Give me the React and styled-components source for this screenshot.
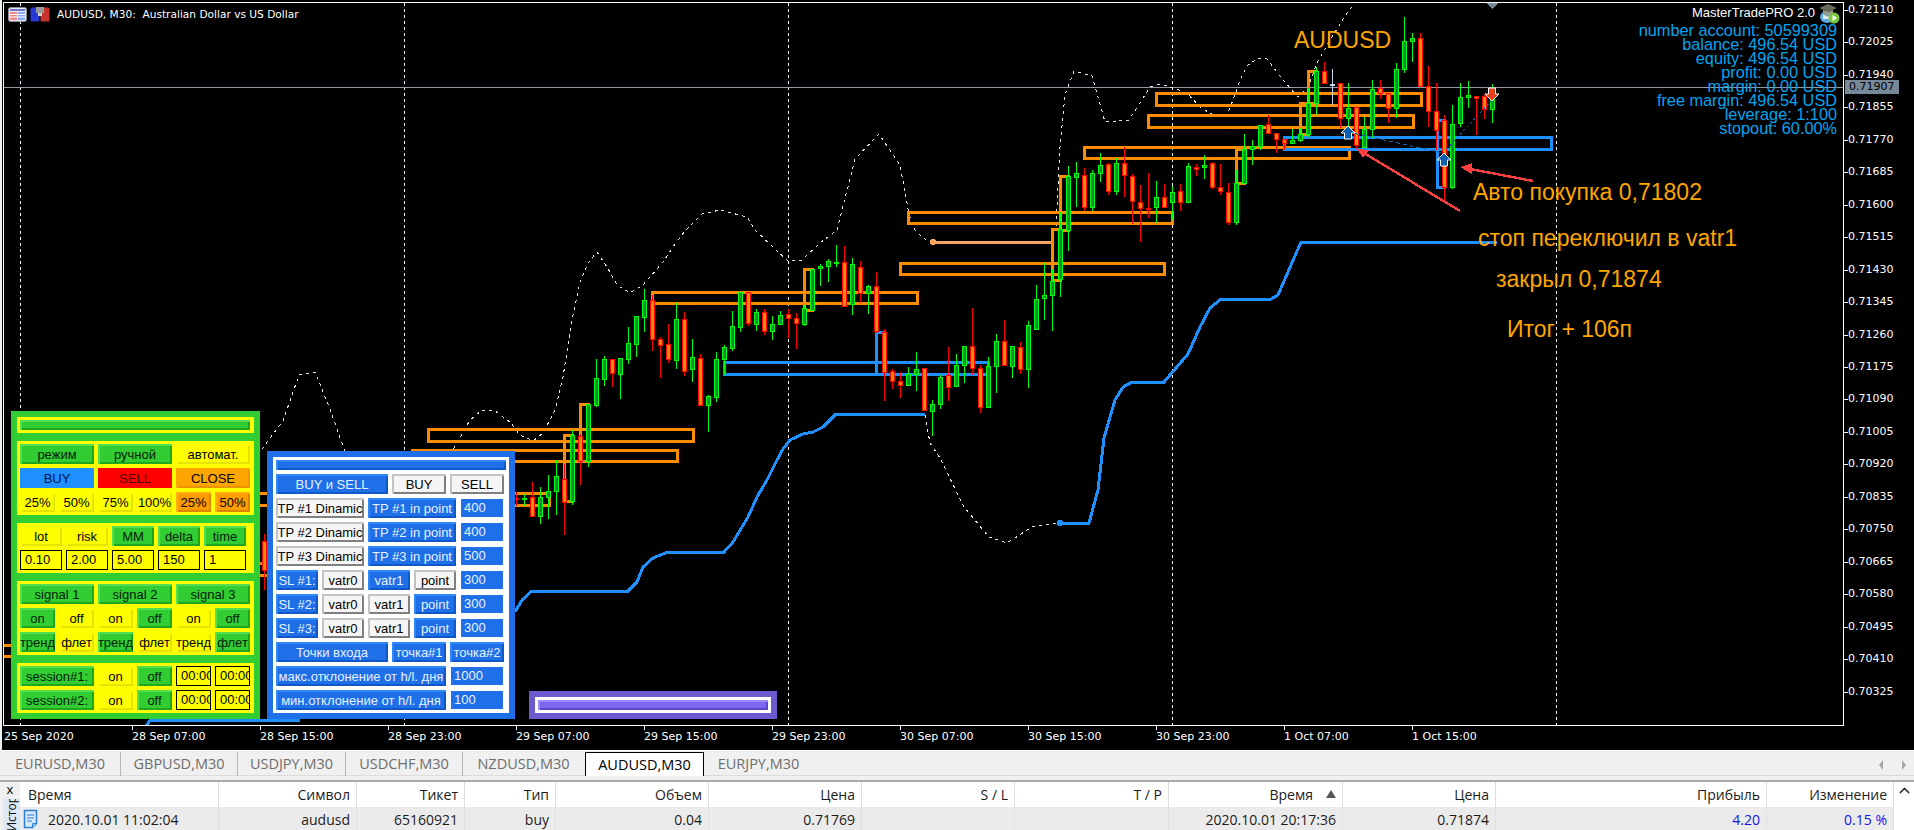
import React from "react"
import styled, { createGlobalStyle } from "styled-components"
import { ChevronUp } from "lucide-react"

const GlobalStyle = createGlobalStyle`
  html, body {
    margin: 0;
    padding: 0;
    background: #f0f0f0;
    overflow: hidden;
  }
  * {
    box-sizing: border-box;
  }
`

// type, body top, body bottom, wick top, wick bottom. first candle sits at x=516, step is 8px
const candles = [
  ["r",498,498,492,506],["g",498,498,494,506],["r",497,516,482,517],["g",497,516,487,524],
  ["g",491,497,475,519],["g",476,491,460,515],["r",479,502,464,535],["g",435,501,430,505],
  ["r",436,461,434,485],["g",404,461,404,467],["g",378,405,359,407],["g",359,379,356,386],
  ["r",359,373,359,387],["g",358,374,358,399],["g",343,359,327,364],["g",316,344,316,357],
  ["g",300,317,289,332],["r",300,339,295,351],["r",339,345,337,378],["r",344,359,324,363],
  ["g",319,360,303,369],["r",319,371,312,376],["g",357,369,339,382],["r",358,405,354,405],
  ["g",396,405,395,432],["g",359,397,352,402],["g",347,359,345,375],["g",326,348,311,351],
  ["g",292,327,292,332],["r",292,323,292,326],["g",312,324,309,331],["r",312,331,309,335],
  ["g",324,331,316,340],["g",315,324,311,325],["r",314,318,309,338],["r",318,323,313,349],
  ["g",308,324,305,326],["g",269,310,269,310],["g",266,268,264,286],["g",261,266,259,282],
  ["g",262,262,245,267],["r",262,306,246,306],["g",264,304,258,315],["r",267,293,261,303],
  ["g",286,293,285,314],["r",286,331,272,333],["r",332,372,329,401],["r",371,381,369,389],
  ["r",381,385,372,398],["g",374,385,367,386],["g",369,374,352,391],["r",368,410,368,410],
  ["g",404,411,400,436],["g",377,404,375,409],["r",375,387,347,401],["g",365,386,354,387],
  ["g",346,365,346,383],["r",346,368,308,375],["r",368,407,365,413],["g",366,407,357,407],
  ["g",341,366,334,393],["r",341,365,320,365],["g",346,366,346,378],["r",347,369,342,374],
  ["g",325,369,321,388],["g",299,329,285,329],["g",295,298,263,320],["g",281,295,269,331],
  ["g",229,279,212,297],["g",176,230,166,251],["g",173,177,162,207],["r",175,207,168,211],
  ["g",173,207,170,211],["g",165,173,153,182],["r",164,191,163,195],["g",163,191,158,195],
  ["r",163,175,147,197],["r",176,201,174,224],["r",202,208,185,242],["r",208,208,173,218],
  ["g",197,207,181,223],["r",197,207,184,207],["g",192,202,186,220],["r",191,202,184,211],
  ["g",166,202,163,202],["r",167,169,164,176],["g",165,167,155,179],["r",163,187,162,189],
  ["r",187,191,164,195],["r",192,222,183,225],["g",183,222,170,225],["g",149,183,134,183],
  ["g",146,149,140,165],["g",125,146,125,150],["r",124,133,115,133],["r",133,139,133,153],
  ["r",139,143,139,150],["g",140,143,129,144],["g",134,140,128,142],["g",103,134,88,137],
  ["g",71,103,67,115],["r",71,83,62,83],["w",84,84,69,105],["r",83,118,83,128],
  ["g",108,118,83,133],["r",107,145,107,149],["g",129,147,117,147],["g",89,129,80,138],
  ["r",88,93,80,99],["r",93,108,93,123],["g",69,108,63,118],["g",41,69,17,73],
  ["g",38,41,33,62],["r",38,86,33,86],["r",86,111,66,127],["r",111,130,83,150],
  ["r",120,187,115,200],["g",124,187,105,189],["g",97,123,83,127],["g",95,97,81,108],
  ["r",96,98,96,135],["r",96,109,94,119],["g",88,109,84,123],
]

const candleColors = {
  r: { line: "#ff0000", fill: "#ff8c00" },
  g: { line: "#00ff00", fill: "#0b8c3e" },
  w: { line: "#c8d6f0", fill: "#c8d6f0" },
}

// x1, y1, x2, y2
const orangeBoxes = [
  [1156,93,1421,105],[1148,115,1413,127],[1084,147,1349,158],[908,212,1172,223],[900,263,1164,274],
  [652,292,917,303],[428,429,693,441],[412,450,677,461],[240,493,549,505],[150,563,290,575],[-5,645,50,656],
  [804,269,812,310],[580,404,588,461],[564,435,572,501],[1060,176,1068,230],[1052,229,1060,280],
  [1236,149,1244,183],[1300,103,1308,134],[1308,71,1316,103],
]

const blueBoxes = [
  [724,362,988,374],[1284,137,1551,149],[876,332,884,374],[1437,120,1444,187],
]

const stopLines = [
  "145,728 150,720 300,720",
  "515,612 522,600 532,591 628,591 637,582 643,567 653,558 668,552 724,552 733,542 748,517 757,497 767,480 777,460 783,449 790,440 803,434 813,432 823,427 836,414 925,414",
  "1060,523 1089,523 1098,490 1104,438 1110,417 1115,400 1123,387 1132,382 1164,382 1188,354 1200,327 1210,308 1221,299 1271,299 1278,295 1301,242 1497,242",
]

const dottedLines = [
  "258,455 270,438 283,421 299,375 315,372 330,409 345,452",
  "450,455 457,443 470,420 482,410 495,411 510,422 520,435 533,441 543,433 555,410 563,377 572,320 580,282 588,263 597,252 607,267 617,285 630,293 643,285 663,262 673,247 684,232 702,214 720,210 747,217 755,230 773,247 787,260 802,260 820,243 837,230 855,159 879,134 900,165 909,214 915,230 923,238 932,242",
  "925,415 930,443 940,458 964,507 989,537 1007,543 1032,527 1060,523",
  "1056,226 1060,147 1065,95 1074,71 1092,76 1105,122 1129,120 1150,87 1160,84 1173,88 1187,93 1200,107 1213,115 1227,115 1233,100 1242,75 1248,65 1258,58 1267,59 1283,80 1298,97 1308,87 1317,63 1330,40 1347,13 1355,3",
]

const prices = ["0.72110","0.72025","0.71940","0.71855","0.71770","0.71685","0.71600","0.71515","0.71430","0.71345","0.71260","0.71175","0.71090","0.71005","0.70920","0.70835","0.70750","0.70665","0.70580","0.70495","0.70410","0.70325"]
const times = ["25 Sep 2020","28 Sep 07:00","28 Sep 15:00","28 Sep 23:00","29 Sep 07:00","29 Sep 15:00","29 Sep 23:00","30 Sep 07:00","30 Sep 15:00","30 Sep 23:00","1 Oct 07:00","1 Oct 15:00"]
const tabs = ["EURUSD,M30","GBPUSD,M30","USDJPY,M30","USDCHF,M30","NZDUSD,M30","AUDUSD,M30","EURJPY,M30"]
const account = ["number account: 50599309","balance: 496.54 USD","equity: 496.54 USD","profit: 0.00 USD","margin: 0.00 USD","free margin: 496.54 USD","leverage: 1:100","stopout: 60.00%"]
const headers = ["Время","Символ","Тикет","Тип","Объем","Цена","S / L","T / P","Время","Цена","Прибыль","Изменение"]

const tones = {
  green: { bg: "#32cd32", hi: "#52e052", lo: "#1fa81f", fg: "#06200a" },
  yellow: { bg: "#ffff00", hi: "#ffff00", lo: "#e4e400", fg: "#000" },
  dodger: { bg: "#1e90ff", hi: "#1e90ff", lo: "#1e90ff", fg: "#00104a" },
  red: { bg: "#ff0000", hi: "#ff0000", lo: "#ff0000", fg: "#4a0000" },
  orange: { bg: "#ffa500", hi: "#ffa500", lo: "#e89500", fg: "#000" },
  amber: { bg: "#ff9c00", hi: "#ffae10", lo: "#dd8600", fg: "#000" },
  blue: { bg: "#1e6fe8", hi: "#2f88f5", lo: "#0f58c8", fg: "#e8f2ff" },
  white: { bg: "#f5f5f5", hi: "#c4c4c4", lo: "#808080", fg: "#000" },
  violet: { bg: "#7b68ee", hi: "#9a88ff", lo: "#5a48cf", fg: "#fff" },
}

const raised = tone => `inset 2px 2px 0 ${tones[tone].hi}, inset -2px -2px 0 ${tones[tone].lo}`

const Shell = styled.div`
  width: 1914px;
  height: 830px;
  overflow: hidden;
  display: flex;
  flex-direction: column;
  background: #f0f0f0;
`

const ChartArea = styled.div`
  position: relative;
  height: 750px;
  flex: none;
  background: #000;
  box-shadow: inset 2px 0 0 #efefef;
  padding: 2px 0 0 3px;
  font-family: "DejaVu Sans", sans-serif;
  font-size: 11px;
  color: #fff;
`

const ChartRow = styled.div`
  display: flex;
  height: 724px;
`

const Plot = styled.div`
  width: 1841px;
  flex: none;
  border: 1px solid #fff;
  svg {
    display: block;
  }
`

const PriceAxis = styled.div`
  flex: 1;
  padding-top: 1px;
`

const PriceRow = styled.div`
  height: 32.46px;
  line-height: 14px;
  padding-left: 4px;
  position: relative;
  &::before {
    content: "";
    position: absolute;
    left: 0;
    top: 7px;
    width: 4px;
    height: 1px;
    background: #fff;
  }
`

const PriceTag = styled.div`
  position: absolute;
  left: 1845px;
  top: 80px;
  width: 54px;
  height: 14px;
  line-height: 14px;
  background: #778899;
  color: #000;
  padding-left: 4px;
`

const TimeAxis = styled.div`
  display: flex;
  padding: 4px 0 0 1px;
`

const TimeCell = styled.div`
  width: 128px;
  flex: none;
  line-height: 14px;
  position: relative;
  &::before {
    content: "";
    position: absolute;
    left: 0;
    top: -4px;
    width: 1px;
    height: 4px;
    background: #fff;
    display: ${p => (p.$first ? "none" : "block")};
  }
`

const ChartTitle = styled.div`
  position: absolute;
  left: 8px;
  top: 6px;
  display: flex;
  align-items: center;
  gap: 3px;
  height: 16px;
  font-size: 10.6px;
  white-space: pre;
  span {
    margin-left: 4px;
  }
`

const AccountInfo = styled.div`
  position: absolute;
  right: 77px;
  top: 3px;
  display: flex;
  flex-direction: column;
  align-items: flex-end;
  font-family: "Liberation Sans", sans-serif;
  font-size: 16.3px;
  line-height: 14px;
  color: #00a5f0;
`

const Robot = styled.div`
  display: flex;
  align-items: center;
  height: 20px;
  margin-right: -3px;
  gap: 3px;
  color: #fff;
  font-size: 13px;
`

const Note = styled.div`
  position: absolute;
  left: ${p => p.$x}px;
  top: ${p => p.$y}px;
  font-family: "Liberation Sans", sans-serif;
  font-size: 23px;
  line-height: 24px;
  color: #ffa500;
  white-space: nowrap;
`

const Panel = styled.div`
  position: absolute;
  left: ${p => p.$x}px;
  top: ${p => p.$y}px;
  width: ${p => p.$w}px;
  background: ${p => p.$bg};
  padding: 6px;
  display: flex;
  flex-direction: column;
  gap: ${p => p.$gap || 0}px;
  font-family: "Liberation Sans", sans-serif;
  font-size: 13px;
`

const Section = styled.div`
  background: ${p => p.$bg};
  padding: 3px;
  display: flex;
  flex-direction: column;
  gap: 4px;
`

const Row = styled.div`
  display: flex;
  gap: 4px;
  height: 20px;
  align-items: center;
`

const Bar = styled.div`
  height: 10px;
  width: 230px;
  background: ${p => tones[p.$tone].bg};
  box-shadow: ${p => raised(p.$tone)};
`

const Key = styled.div`
  width: ${p => p.$w}px;
  height: 20px;
  flex: none;
  overflow: hidden;
  white-space: nowrap;
  display: flex;
  align-items: center;
  justify-content: center;
  background: ${p => tones[p.$tone].bg};
  color: ${p => tones[p.$tone].fg};
  box-shadow: ${p => raised(p.$tone)};
`

const YellowEdit = styled.div`
  width: ${p => p.$w}px;
  height: 20px;
  flex: none;
  overflow: hidden;
  white-space: nowrap;
  line-height: 18px;
  padding-left: 4px;
  background: #ffff00;
  color: #000;
  border: 1px solid #000;
`

const BlueEdit = styled.div`
  width: ${p => p.$w}px;
  height: 18px;
  flex: none;
  margin-left: 1px;
  line-height: 18px;
  padding-left: 3px;
  background: #1e6fe8;
  color: #e8f2ff;
`

const TabBar = styled.div`
  height: 26px;
  flex: none;
  display: flex;
  align-items: flex-start;
  padding-top: 1px;
  border-top: 1px solid #fff;
  border-bottom: 1px solid #dcdcdc;
  font-family: "Open Sans", sans-serif;
  font-size: 14.5px;
  color: #6e6e6e;
`

const Tab = styled.div`
  width: ${p => p.$w}px;
  height: 24px;
  line-height: 23px;
  flex: none;
  text-align: center;
  border-right: 1px solid ${p => (p.$plain ? "transparent" : "#b5b5b5")};
  ${p => p.$active && `
    background: #fff;
    color: #000;
    border: 1px solid #000;
    border-bottom: none;
  `}
`

const TabArrows = styled.div`
  margin-left: auto;
  display: flex;
  gap: 17px;
  padding: 8px 7px 0 0;
`

const TableWrap = styled.div`
  flex: 1;
  background: #fff;
  margin-top: 4px;
  border-top: 2px solid #a9a9a9;
  display: flex;
  font-family: "Open Sans", sans-serif;
  font-size: 14px;
  color: #1c1c1c;
`

const SideRail = styled.div`
  width: 20px;
  flex: none;
  background: #f0f0f0;
  display: flex;
  flex-direction: column;
  align-items: center;
`

const CloseMark = styled.div`
  height: 17px;
  line-height: 15px;
  font-size: 13px;
  color: #000;
`

const SideTab = styled.div`
  flex: 1;
  width: 17px;
  margin-left: 3px;
  background: #dce8f6;
  overflow: hidden;
  writing-mode: vertical-rl;
  transform: rotate(180deg);
  font-size: 12px;
  line-height: 17px;
  color: #111;
`

const TableBody = styled.div`
  width: 1874px;
  flex: none;
`

const columns = "199px 138px 108px 91px 153px 153px 153px 154px 174px 153px 271px 127px"

const HeaderRow = styled.div`
  display: grid;
  grid-template-columns: ${columns};
  height: 25px;
`

const DataRow = styled.div`
  display: grid;
  grid-template-columns: ${columns};
  height: 24px;
  background: #ebebeb;
`

const Cell = styled.div`
  padding: 0 6px 0 ${p => p.$pad || 0}px;
  line-height: 23px;
  border-right: 1px solid #dedede;
  white-space: nowrap;
  display: flex;
  justify-content: ${p => (p.$pad ? "flex-start" : "flex-end")};
  align-items: center;
  gap: 8px;
  color: ${p => (p.$profit ? "#1414e6" : "inherit")};
`

const SortMark = styled.span`
  width: 0;
  height: 0;
  margin: 0 0 2px 5px;
  border-left: 5px solid transparent;
  border-right: 5px solid transparent;
  border-bottom: 8px solid #555;
`

const ScrollRail = styled.div`
  flex: 1;
  background: #fff;
  display: flex;
  justify-content: center;
  color: #333;
`

const Candle = ({ x, kind, top, bottom, high, low }) => {
  const color = candleColors[kind]
  return (
    <g>
      <line x1={x + 0.5} x2={x + 0.5} y1={high} y2={low} stroke={color.line} />
      <rect x={x - 1.5} y={top + 0.5} width={4} height={Math.max(bottom - top, 1)} fill={color.fill} stroke={color.line} />
    </g>
  )
}

const TradeArrow = ({ x, y, color, down }) => (
  <polygon
    transform={`translate(${x} ${y})${down ? " rotate(180)" : ""}`}
    points="0,-7 7,0 3.5,0 3.5,6 -3.5,6 -3.5,0 -7,0"
    fill={color}
    stroke="#fff"
    strokeWidth="1"
    shapeRendering="geometricPrecision"
  />
)

const ChartDrawing = () => (
  <svg width="1839" height="722" viewBox="4 3 1839 722" shapeRendering="crispEdges">
    {[20, 404, 788, 1172, 1556].map(x => (
      <line key={x} x1={x + 0.5} x2={x + 0.5} y1="3" y2="725" stroke="#fff" strokeDasharray="3 3" />
    ))}
    <line x1="4" x2="1843" y1="87.5" y2="87.5" stroke="#8f9aa5" />
    <polygon points="1486,3 1498,3 1492,9" fill="#778899" />

    {dottedLines.map(d => (
      <polyline key={d} points={d} fill="none" stroke="#e8e8e8" strokeDasharray="3 4" />
    ))}
    {stopLines.map(d => (
      <polyline key={d} points={d} fill="none" stroke="#1e90ff" strokeWidth="3" />
    ))}
    <polyline points="933,242 1052,242" fill="none" stroke="#f4a460" strokeWidth="3" />
    <circle cx="933" cy="242" r="3" fill="#f4a460" />
    <circle cx="1060" cy="523" r="3" fill="#1e90ff" />

    {orangeBoxes.map(([x1, y1, x2, y2]) => (
      <rect key={`${x1}-${y1}`} x={x1} y={y1} width={x2 - x1} height={y2 - y1} fill="none" stroke="#ff8c00" strokeWidth="3" />
    ))}
    {blueBoxes.map(([x1, y1, x2, y2]) => (
      <rect key={`${x1}-${y1}`} x={x1} y={y1} width={x2 - x1} height={y2 - y1} fill="none" stroke="#1e90ff" strokeWidth="3" />
    ))}

    <Candle x={264} kind="r" top={541} bottom={570} high={534} low={590} />
    {candles.map(([kind, top, bottom, high, low], i) => (
      <Candle key={i} x={516 + i * 8} kind={kind} top={top} bottom={bottom} high={high} low={low} />
    ))}

    <polyline points="1348,132 1443,153" fill="none" stroke="#1a5fa8" strokeDasharray="4 3" />
    <polyline points="1443,153 1492,100" fill="none" stroke="#1a5fa8" strokeDasharray="2 3" />
    <TradeArrow x={1348} y={133} color="#0b5fb0" />
    <TradeArrow x={1444} y={160} color="#0b5fb0" />
    <TradeArrow x={1492} y={94} color="#e8401c" down />

    <polyline points="1460,211 1364,153" fill="none" stroke="#ff4040" strokeWidth="2.4" />
    <polygon points="1357,149 1369,150 1363,158" fill="#ff4040" />
    <polyline points="1533,181 1470,169" fill="none" stroke="#ff4040" strokeWidth="2.4" />
    <polygon points="1460,167 1472,163 1472,174" fill="#ff4040" />
  </svg>
)

const WindowIcon = () => (
  <svg width="19" height="15" viewBox="0 0 19 15">
    <rect x="0.5" y="0.5" width="18" height="14" rx="2" fill="#e8e8f0" stroke="#8a8a9a" />
    <rect x="2" y="2" width="15" height="2" fill="#6a78c8" />
    <rect x="2" y="5" width="7" height="8" fill="#f08a8a" />
    <rect x="10" y="5" width="7" height="8" fill="#8aa8f0" />
    <path d="M2 7.5h7M2 10h7M10 7.5h7M10 10h7" stroke="#fff" />
  </svg>
)

const TraderIcon = () => (
  <svg width="20" height="15" viewBox="0 0 20 15">
    <rect x="0.5" y="0.5" width="9" height="14" rx="1.5" fill="#2a3ad8" />
    <rect x="10.5" y="0.5" width="9" height="14" rx="1.5" fill="#c8342c" />
    <rect x="6" y="0" width="8" height="6" fill="#9a9a9a" />
    <rect x="8" y="6" width="4" height="3" fill="#d0d0d0" />
  </svg>
)

const RobotIcon = () => (
  <svg width="22" height="22" viewBox="0 0 22 22">
    <ellipse cx="9" cy="15" rx="7" ry="6" fill="#5aa8e8" />
    <path d="M5 12c3 3 6 3 9 1v4H5z" fill="#e8e8e8" />
    <polygon points="1,6 10,2 19,6 10,10" fill="#6a6a5a" />
    <path d="M5 8v4c3 2 7 2 10 0V8l-5 2z" fill="#9a9a8a" />
    <circle cx="16" cy="16" r="5.5" fill="#7ac83a" />
    <polygon points="14.5,13 14.5,19 19,16" fill="#fff" />
  </svg>
)

const DocIcon = () => (
  <svg width="17" height="20" viewBox="0 0 17 20">
    <path d="M1.5 1.5h12v13l-4 4h-8z" fill="#d6e8fb" stroke="#2a7fd0" strokeWidth="1.5" />
    <path d="M4 6h7M4 9h7M4 12h5" stroke="#2a7fd0" />
    <path d="M9.5 18.5v-4h4" fill="#9cc6f0" stroke="#2a7fd0" />
  </svg>
)

const TabArrow = ({ left }) => (
  <svg width="6" height="10" viewBox="0 0 6 10">
    <path d={left ? "M5 0L1 5l4 5V0z" : "M1 0l4 5-4 5V0z"} fill="#a5a5a5" />
  </svg>
)

const GreenPanel = () => (
  <Panel $x={11} $y={411} $w={249} $bg="#32cd32" $gap={8}>
    <Section $bg="#ffff00">
      <Bar $tone="green" />
    </Section>
    <Section $bg="#ffff00">
      <Row>
        <Key $w={74} $tone="green">режим</Key>
        <Key $w={74} $tone="green">ручной</Key>
        <Key $w={74} $tone="yellow">автомат.</Key>
      </Row>
      <Row>
        <Key $w={74} $tone="dodger">BUY</Key>
        <Key $w={74} $tone="red">SELL</Key>
        <Key $w={74} $tone="orange">CLOSE</Key>
      </Row>
      <Row>
        <Key $w={35} $tone="yellow">25%</Key>
        <Key $w={35} $tone="yellow">50%</Key>
        <Key $w={35} $tone="yellow">75%</Key>
        <Key $w={35} $tone="yellow">100%</Key>
        <Key $w={35} $tone="amber">25%</Key>
        <Key $w={35} $tone="amber">50%</Key>
      </Row>
    </Section>
    <Section $bg="#ffff00">
      <Row>
        <Key $w={42} $tone="yellow">lot</Key>
        <Key $w={42} $tone="yellow">risk</Key>
        <Key $w={42} $tone="green">MM</Key>
        <Key $w={42} $tone="green">delta</Key>
        <Key $w={42} $tone="green">time</Key>
      </Row>
      <Row>
        <YellowEdit $w={42}>0.10</YellowEdit>
        <YellowEdit $w={42}>2.00</YellowEdit>
        <YellowEdit $w={42}>5.00</YellowEdit>
        <YellowEdit $w={42}>150</YellowEdit>
        <YellowEdit $w={42}>1</YellowEdit>
      </Row>
    </Section>
    <Section $bg="#ffff00">
      <Row>
        <Key $w={74} $tone="green">signal 1</Key>
        <Key $w={74} $tone="green">signal 2</Key>
        <Key $w={74} $tone="green">signal 3</Key>
      </Row>
      <Row>
        <Key $w={35} $tone="green">on</Key>
        <Key $w={35} $tone="yellow">off</Key>
        <Key $w={35} $tone="yellow">on</Key>
        <Key $w={35} $tone="green">off</Key>
        <Key $w={35} $tone="yellow">on</Key>
        <Key $w={35} $tone="green">off</Key>
      </Row>
      <Row>
        <Key $w={35} $tone="green">тренд</Key>
        <Key $w={35} $tone="yellow">флет</Key>
        <Key $w={35} $tone="green">тренд</Key>
        <Key $w={35} $tone="yellow">флет</Key>
        <Key $w={35} $tone="yellow">тренд</Key>
        <Key $w={35} $tone="green">флет</Key>
      </Row>
    </Section>
    <Section $bg="#ffff00">
      <Row>
        <Key $w={74} $tone="green">session#1:</Key>
        <Key $w={35} $tone="yellow">on</Key>
        <Key $w={35} $tone="green">off</Key>
        <YellowEdit $w={35}>00:00</YellowEdit>
        <YellowEdit $w={35}>00:00</YellowEdit>
      </Row>
      <Row>
        <Key $w={74} $tone="green">session#2:</Key>
        <Key $w={35} $tone="yellow">on</Key>
        <Key $w={35} $tone="green">off</Key>
        <YellowEdit $w={35}>00:00</YellowEdit>
        <YellowEdit $w={35}>00:00</YellowEdit>
      </Row>
    </Section>
  </Panel>
)

const BluePanel = () => (
  <Panel $x={267} $y={451} $w={248} $bg="#1e6fe8">
    <Section $bg="#fff">
      <Bar $tone="blue" />
      <Row>
        <Key $w={112} $tone="blue">BUY и SELL</Key>
        <Key $w={54} $tone="white">BUY</Key>
        <Key $w={54} $tone="white">SELL</Key>
      </Row>
      {["#1", "#2", "#3"].map((n, i) => (
        <Row key={n}>
          <Key $w={88} $tone="white">TP {n} Dinamic</Key>
          <Key $w={88} $tone="blue">TP {n} in point</Key>
          <BlueEdit $w={42}>{i === 2 ? 500 : 400}</BlueEdit>
        </Row>
      ))}
      {["#1", "#2", "#3"].map((n, i) => (
        <Row key={n}>
          <Key $w={42} $tone="blue">SL {n}:</Key>
          <Key $w={42} $tone="white">vatr0</Key>
          <Key $w={42} $tone={i === 0 ? "blue" : "white"}>vatr1</Key>
          <Key $w={42} $tone={i === 0 ? "white" : "blue"}>point</Key>
          <BlueEdit $w={42}>300</BlueEdit>
        </Row>
      ))}
      <Row>
        <Key $w={112} $tone="blue">Точки входа</Key>
        <Key $w={54} $tone="blue">точка#1</Key>
        <Key $w={54} $tone="blue">точка#2</Key>
      </Row>
      <Row>
        <Key $w={170} $tone="blue">макс.отклонение от h/l. дня</Key>
        <BlueEdit $w={52}>1000</BlueEdit>
      </Row>
      <Row>
        <Key $w={170} $tone="blue">мин.отклонение от h/l. дня</Key>
        <BlueEdit $w={52}>100</BlueEdit>
      </Row>
    </Section>
  </Panel>
)

const VioletPanel = () => (
  <Panel $x={529} $y={691} $w={248} $bg="#6a5acd">
    <Section $bg="#fff">
      <Bar $tone="violet" />
    </Section>
  </Panel>
)

const tabWidths = [121, 117, 108, 117, 122, 119, 110]

const App = () => (
  <Shell>
    <GlobalStyle />
    <ChartArea>
      <ChartRow>
        <Plot>
          <ChartDrawing />
        </Plot>
        <PriceAxis>
          {prices.map(p => (
            <PriceRow key={p}>{p}</PriceRow>
          ))}
        </PriceAxis>
      </ChartRow>
      <TimeAxis>
        {times.map((t, i) => (
          <TimeCell key={t} $first={i === 0}>{t}</TimeCell>
        ))}
      </TimeAxis>

      <ChartTitle>
        <WindowIcon />
        <TraderIcon />
        <span>AUDUSD, M30:  Australian Dollar vs US Dollar</span>
      </ChartTitle>
      <PriceTag>0.71907</PriceTag>
      <AccountInfo>
        <Robot>MasterTradePRO 2.0<RobotIcon /></Robot>
        {account.map(line => (
          <div key={line}>{line}</div>
        ))}
      </AccountInfo>

      <Note $x={1294} $y={28}>AUDUSD</Note>
      <Note $x={1473} $y={180}>Авто покупка 0,71802</Note>
      <Note $x={1478} $y={226}>стоп переключил в vatr1</Note>
      <Note $x={1496} $y={267}>закрыл 0,71874</Note>
      <Note $x={1507} $y={317}>Итог + 106п</Note>

      <GreenPanel />
      <BluePanel />
      <VioletPanel />
    </ChartArea>

    <TabBar>
      {tabs.map((t, i) => (
        <Tab key={t} $w={tabWidths[i]} $active={i === 5} $plain={i === 4 || i === 6}>{t}</Tab>
      ))}
      <TabArrows>
        <TabArrow left />
        <TabArrow />
      </TabArrows>
    </TabBar>

    <TableWrap>
      <SideRail>
        <CloseMark>x</CloseMark>
        <SideTab>История</SideTab>
      </SideRail>
      <TableBody>
        <HeaderRow>
          {headers.map((h, i) => (
            <Cell key={i} $pad={i === 0 ? 8 : 0}>
              {h}
              {i === 8 && <SortMark />}
            </Cell>
          ))}
        </HeaderRow>
        <DataRow>
          <Cell $pad={3}><DocIcon />2020.10.01 11:02:04</Cell>
          <Cell>audusd</Cell>
          <Cell>65160921</Cell>
          <Cell>buy</Cell>
          <Cell>0.04</Cell>
          <Cell>0.71769</Cell>
          <Cell />
          <Cell />
          <Cell>2020.10.01 20:17:36</Cell>
          <Cell>0.71874</Cell>
          <Cell $profit>4.20</Cell>
          <Cell $profit>0.15 %</Cell>
        </DataRow>
      </TableBody>
      <ScrollRail>
        <ChevronUp size={17} strokeWidth={2} />
      </ScrollRail>
    </TableWrap>
  </Shell>
)

export default App
